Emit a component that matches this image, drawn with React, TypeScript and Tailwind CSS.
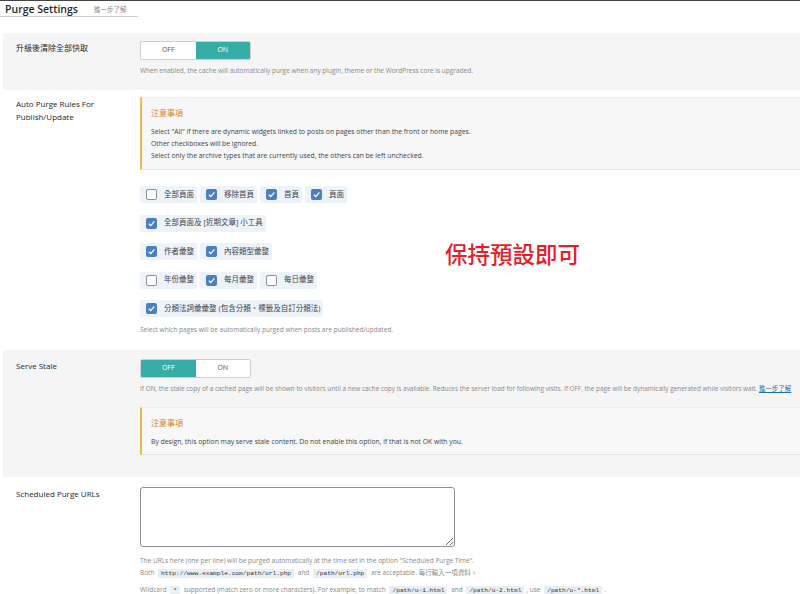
import React from 'react';

const font = { fontFamily: '"Open Sans", "Noto Sans CJK TC", sans-serif' };

const Toggle = ({ on }: { on: boolean }) => (
  <div className="flex w-[111px] h-[19px] border border-[#cfcfcf] rounded-[2px] overflow-hidden text-[7px] bg-white">
    <div
      className={`w-1/2 flex items-center justify-center ${
        !on ? 'bg-[#36aea7] text-white' : 'text-[#555]'
      }`}
    >
      OFF
    </div>
    <div
      className={`w-1/2 flex items-center justify-center ${
        on ? 'bg-[#36aea7] text-white' : 'text-[#555]'
      }`}
    >
      ON
    </div>
  </div>
);

const Notice = ({ lines, className }: { lines: string[]; className?: string }) => (
  <div
    className={`border-l-[2px] border-l-[#f0b849] border-b border-b-[#e6e6e6] border-t border-t-[#eeeeee] bg-[#f7f7f7] pl-[9px] pt-[9px] ${className}`}
  >
    <div className="text-[8px] leading-[12px] text-[#d9822b]">注意事項</div>
    <div className="mt-[7px] text-[6.8px] leading-[12px] text-[#3c434a]">
      {lines.map((l) => (
        <div key={l}>{l}</div>
      ))}
    </div>
  </div>
);

const Check = ({ checked, label }: { checked: boolean; label: string }) => (
  <div className="flex items-center h-[17px] bg-[#eef3f9] pl-[6px] pr-[3px] rounded-[2px]">
    {checked ? (
      <span className="w-[11px] h-[11px] rounded-[2px] bg-[#4a7fc1] flex items-center justify-center">
        <svg width="9" height="9" viewBox="0 0 10 10">
          <path d="M2 5.2 L4.2 7.3 L8.2 2.7" stroke="white" strokeWidth="1.4" fill="none" />
        </svg>
      </span>
    ) : (
      <span className="w-[11px] h-[11px] rounded-[2px] bg-white border border-[#8c8f94]" />
    )}
    <span className="ml-[7px] text-[7.5px] text-[#3c434a]">{label}</span>
  </div>
);

const Code = ({ children }: { children: React.ReactNode }) => (
  <code
    className="bg-[#e9eef4] px-[3px] py-[1px] text-[6.2px] text-[#333] mx-[2px]"
    style={{ fontFamily: '"Liberation Mono", monospace' }}
  >
    {children}
  </code>
);

const Label = ({ children }: { children: React.ReactNode }) => (
  <div className="w-[137px] pl-[13px] shrink-0 text-[8px] leading-[13px] text-[#23282d]">{children}</div>
);

export default function App() {
  return (
    <div className="w-[800px] h-[594px] bg-white overflow-hidden border-t border-t-[#444]" style={font}>
      <div className="h-[32px]">
        <div className="flex items-end w-[138px] h-[16px] border-b border-b-[#cccccc] pl-[5px]">
          <span className="text-[10.5px] font-semibold text-[#23282d] leading-[14px]">Purge Settings</span>
          <span className="ml-[16px] text-[6.5px] text-[#888] leading-[12px]">進一步了解</span>
        </div>
      </div>

      <div className="ml-[3px] h-[57px] bg-[#f5f5f5] flex">
        <Label>
          <div className="pt-[8px]">升級後清除全部快取</div>
        </Label>
        <div className="pt-[8px]">
          <Toggle on />
          <div className="mt-[6px] text-[6.5px] leading-[9px] text-[#888]">
            When enabled, the cache will automatically purge when any plugin, theme or the WordPress core is upgraded.
          </div>
        </div>
      </div>

      <div className="ml-[3px] h-[255px] flex">
        <Label>
          <div className="pt-[7px]">
            Auto Purge Rules For
            <br />
            Publish/Update
          </div>
        </Label>
        <div className="flex-1 pt-[7px] relative">
          <Notice
            className="h-[73px]"
            lines={[
              'Select "All" if there are dynamic widgets linked to posts on pages other than the front or home pages.',
              'Other checkboxes will be ignored.',
              'Select only the archive types that are currently used, the others can be left unchecked.',
            ]}
          />
          <div className="mt-[16px] flex flex-col gap-[11.5px]">
            <div className="flex gap-[3px]">
              <Check checked={false} label="全部頁面" />
              <Check checked label="移除首頁" />
              <Check checked label="首頁" />
              <Check checked label="頁面" />
            </div>
            <div className="flex gap-[3px]">
              <Check checked label="全部頁面及 [近期文章] 小工具" />
            </div>
            <div className="flex gap-[3px]">
              <Check checked label="作者彙整" />
              <Check checked label="內容類型彙整" />
            </div>
            <div className="flex gap-[3px]">
              <Check checked={false} label="年份彙整" />
              <Check checked label="每月彙整" />
              <Check checked={false} label="每日彙整" />
            </div>
            <div className="flex gap-[3px]">
              <Check checked label="分類法詞彙彙整 (包含分類、標籤及自訂分類法)" />
            </div>
          </div>
          <div className="mt-[8px] text-[6.5px] leading-[9px] text-[#888]">
            Select which pages will be automatically purged when posts are published/updated.
          </div>
          <div className="absolute left-[305px] top-[152px] text-[22.5px] leading-[26px] text-[#e3202a] font-medium">
            保持預設即可
          </div>
        </div>
      </div>

      <div className="ml-[3px] mt-[5px] h-[127px] bg-[#f5f5f5] flex">
        <Label>
          <div className="pt-[9px]">Serve Stale</div>
        </Label>
        <div className="flex-1 pt-[9px]">
          <Toggle on={false} />
          <div className="mt-[6px] text-[6.45px] leading-[9px] text-[#888] whitespace-nowrap">
            If ON, the stale copy of a cached page will be shown to visitors until a new cache copy is available. Reduces the server load for following visits. If OFF, the page will be dynamically generated while visitors wait.{' '}
            <span className="text-[#2271b1] underline">進一步了解</span>
          </div>
          <Notice
            className="mt-[14px] h-[48px] bg-[#f8f8f8]"
            lines={['By design, this option may serve stale content. Do not enable this option, if that is not OK with you.']}
          />
        </div>
      </div>

      <div className="ml-[3px] mt-[3px] flex">
        <Label>
          <div className="pt-[7px]">Scheduled Purge URLs</div>
        </Label>
        <div className="flex-1 pt-[7px]">
          <textarea className="block w-[315px] h-[60px] border border-[#8c8f94] rounded-[3px] bg-white" />
          <div className="mt-[8px] text-[6.5px] leading-[12px] text-[#888]">
            <div>The URLs here (one per line) will be purged automatically at the time set in the option "Scheduled Purge Time".</div>
            <div>
              Both <Code>http://www.example.com/path/url.php</Code> and <Code>/path/url.php</Code> are acceptable. 每行輸入一項資料。
            </div>
            <div className="mt-[4px]">
              Wildcard <Code>*</Code> supported (match zero or more characters). For example, to match{' '}
              <Code>/path/u-1.html</Code> and <Code>/path/u-2.html</Code>, use <Code>/path/u-*.html</Code>.
            </div>
          </div>
        </div>
      </div>
    </div>
  );
}
